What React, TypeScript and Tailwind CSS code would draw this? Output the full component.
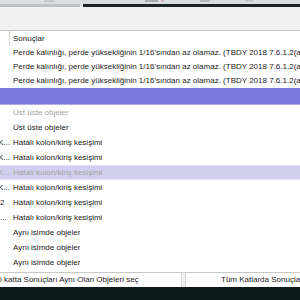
import React from "react"

type Row = { left?: string; leftStart?: boolean; text: string; tone?: "muted" | "normal"; bg?: "sel" | "soft" }

const rows: Row[] = [
  { text: "Perde kalınlığı, perde yüksekliğinin 1/16'sından az olamaz. (TBDY 2018 7.6.1.2(a)" },
  { text: "Perde kalınlığı, perde yüksekliğinin 1/16'sından az olamaz. (TBDY 2018 7.6.1.2(a)" },
  { text: "Perde kalınlığı, perde yüksekliğinin 1/16'sından az olamaz. (TBDY 2018 7.6.1.2(a)" },
]

const lower: Row[] = [
  { text: "Üst üste objeler", tone: "muted" },
  { text: "Üst üste objeler" },
  { left: "K...", text: "Hatalı kolon/kiriş kesişimi" },
  { left: "K...", text: "Hatalı kolon/kiriş kesişimi" },
  { left: "K...", text: "Hatalı kolon/kiriş kesişimi", tone: "muted", bg: "soft" },
  { left: "K...", text: "Hatalı kolon/kiriş kesişimi" },
  { left: "2", leftStart: true, text: "Hatalı kolon/kiriş kesişimi" },
  { left: "...", leftStart: true, text: "Hatalı kolon/kiriş kesişimi" },
  { text: "Aynı isimde objeler" },
  { text: "Aynı isimde objeler" },
  { text: "Aynı isimde objeler" },
]

function ResultRow({ row, h }: { row: Row; h: string }) {
  const color = row.tone === "muted" ? "text-[#a3a3a3]" : "text-[#1c1c1c]"
  const bg =
    row.bg === "soft" ? "bg-[#d3d0ef] border-y border-[#e2e0f4]" : "bg-white"
  return (
    <div className={`flex shrink-0 items-center ${h} ${bg} ${color}`}>
      <div
        className={`flex w-[10px] shrink-0 overflow-hidden whitespace-nowrap ${
          row.leftStart ? "justify-start" : "justify-end"
        }`}
      >
        {row.left}
      </div>
      <div className="overflow-hidden whitespace-nowrap pl-[3px]">{row.text}</div>
    </div>
  )
}

export default function App() {
  return (
    <div
      className="flex h-[300px] w-[300px] flex-col overflow-hidden bg-white text-[8px] leading-none"
      style={{ fontFamily: '"Liberation Sans", Arial, sans-serif' }}
    >
      {/* toolbar remnants */}
      <div className="relative h-[4px] shrink-0 bg-[#dadde1]">
        <div className="absolute left-[44px] top-0 h-[2px] w-[10px] bg-[#c4c7cb]" />
        <div className="absolute left-[145px] top-0 h-[2px] w-[13px] bg-[#a9adb2]" />
        <div className="absolute left-[161px] top-0 h-[2px] w-[3px] bg-[#c9b3b8]" />
        <div className="absolute left-[200px] top-0 h-[2px] w-[10px] bg-[#b5b9be]" />
        <div className="absolute left-[245px] top-0 h-[2px] w-[8px] bg-[#c4c7cb]" />
      </div>
      <div className="flex h-[3px] shrink-0">
        <div className="w-[80px] bg-[#bfc3c7]" />
        <div className="w-[3px] bg-[#e4e6e8]" />
        <div className="flex-1 bg-[#1b2429]" />
      </div>
      <div className="h-[24px] shrink-0 border-b border-[#c8c8c8] bg-[#f0f0f0]" />

      {/* header */}
      <div className="flex h-[15px] shrink-0 items-center text-[#1c1c1c]">
        <div className="h-full w-[10px] shrink-0 border-r border-[#d6d6d6]" />
        <div className="pl-[3px]">Sonuçlar</div>
      </div>

      {rows.map((r, i) => (
        <ResultRow key={i} row={r} h="h-[14px]" />
      ))}

      <div className="h-[17px] shrink-0 border-b border-[#aeabe9] bg-[#7b78db]" />

      {lower.map((r, i) => (
        <ResultRow key={i} row={r} h="h-[15px]" />
      ))}

      <div className="flex-1" />

      {/* bottom buttons */}
      <div className="flex h-[15px] shrink-0 border-t border-[#c8c8c8] bg-[#f0f0f0] text-[#1c1c1c]">
        <div className="flex w-[182px] items-center overflow-hidden whitespace-nowrap border-r border-[#d9d9d9] bg-white">
          i katta Sonuçları Aynı Olan Objeleri seç
        </div>
        <div className="w-[3px]" />
        <div className="flex flex-1 items-center overflow-hidden whitespace-nowrap border-l border-[#d9d9d9] bg-white pl-[35px]">
          Tüm Katlarda Sonuçları Aynı Olan Objeleri seç
        </div>
      </div>
      <div className="h-[13px] shrink-0 bg-[#0e191e]" />
    </div>
  )
}
